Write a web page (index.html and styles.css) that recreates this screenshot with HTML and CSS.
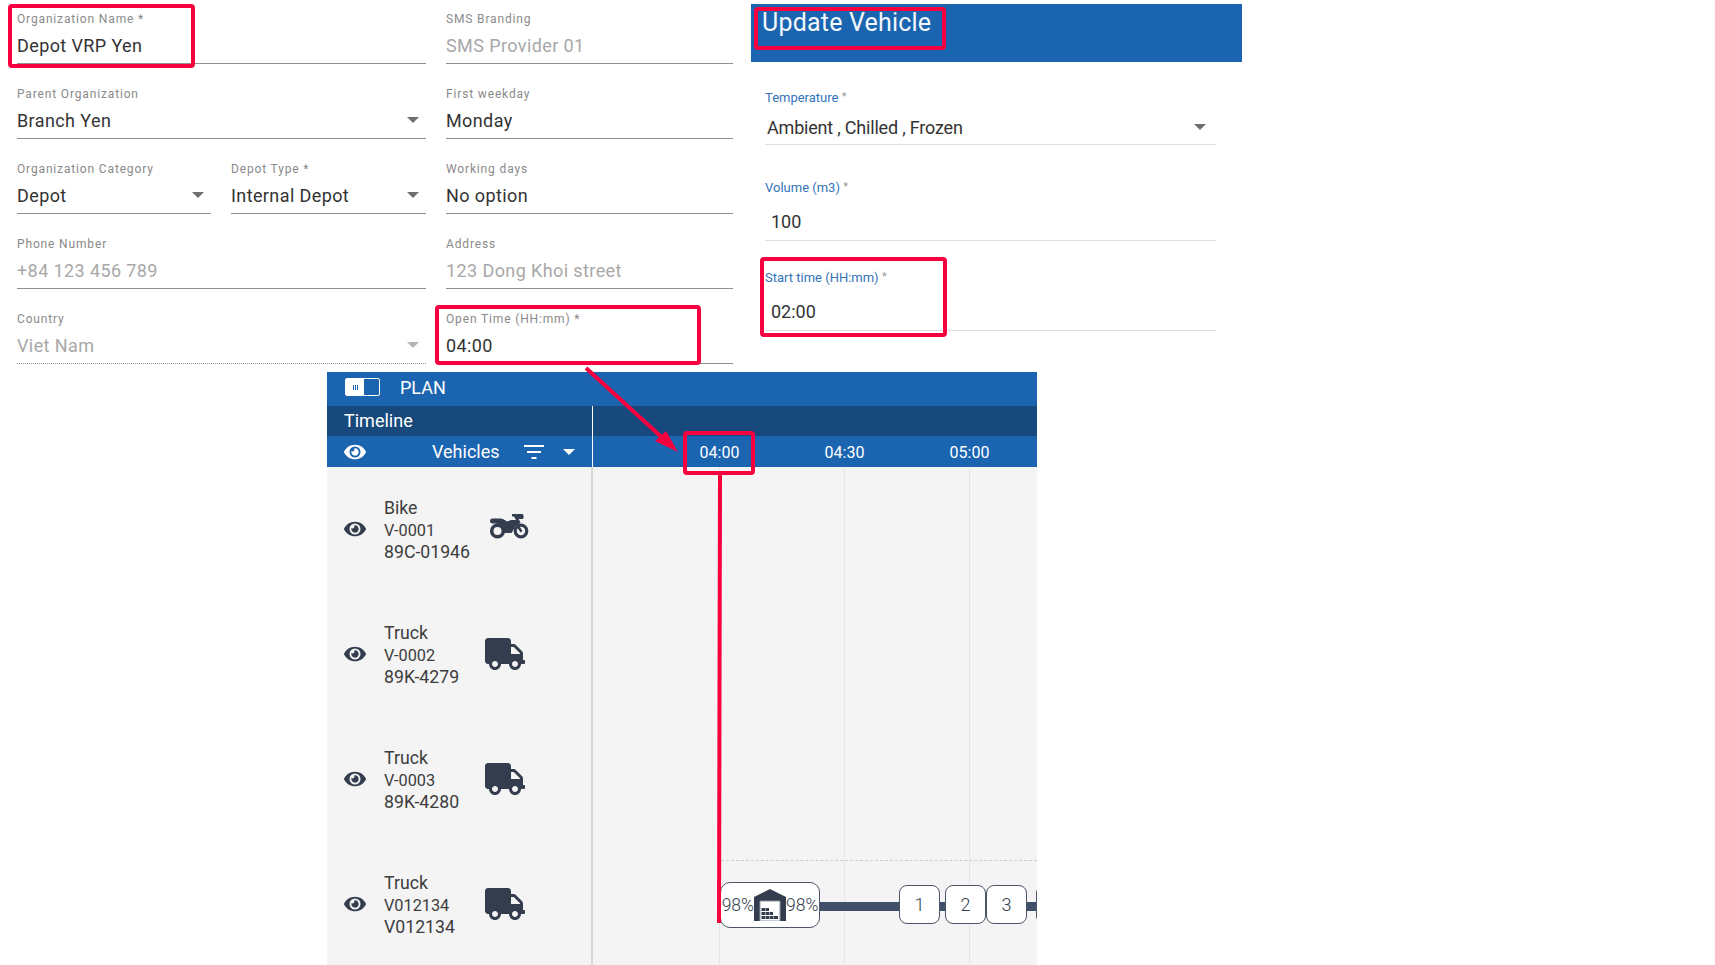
FILE: index.html
```html
<!DOCTYPE html>
<html>
<head>
<meta charset="utf-8">
<title>Depot settings</title>
<link rel="stylesheet" href="styles.css">
</head>
<body>
<svg class="defs" width="0" height="0">
	<symbol id="eye" viewBox="0 0 576 512"><path d="M572.52 241.4C518.29 135.59 410.93 64 288 64S57.68 135.64 3.48 241.41a32.35 32.35 0 0 0 0 29.19C57.71 376.41 165.07 448 288 448s230.32-71.64 284.52-177.41a32.35 32.35 0 0 0 0-29.19zM288 400a144 144 0 1 1 144-144 143.93 143.93 0 0 1-144 144zm0-240a95.31 95.31 0 0 0-25.31 3.79 47.85 47.85 0 0 1-66.9 66.9A95.78 95.78 0 1 0 288 160z"/></symbol>
	<symbol id="truck" viewBox="0 0 640 512"><path d="M624 352h-16V243.9c0-12.7-5.1-24.9-14.1-33.9L494 110.1c-9-9-21.2-14.1-33.9-14.1H416V48c0-26.5-21.5-48-48-48H48C21.5 0 0 21.5 0 48v320c0 26.5 21.5 48 48 48h16c0 53 43 96 96 96s96-43 96-96h128c0 53 43 96 96 96s96-43 96-96h48c8.8 0 16-7.2 16-16v-32c0-8.8-7.2-16-16-16zM160 464c-26.5 0-48-21.5-48-48s21.5-48 48-48 48 21.5 48 48-21.5 48-48 48zm320 0c-26.5 0-48-21.5-48-48s21.5-48 48-48 48 21.5 48 48-21.5 48-48 48zm80-208H416V144h44.1l99.9 99.9V256z"/></symbol>
	<symbol id="bike" viewBox="0 0 40 25"><circle cx="8.500" cy="17" r="5.800" fill="none" stroke="currentColor" stroke-width="3.600"/><circle cx="32" cy="17" r="5.800" fill="none" stroke="currentColor" stroke-width="3.200"/><path d="M1 7C1 5.500 2 4.500 3.500 4.500H11C14 4.500 16 6 18 7.500L22 6H27L25 2.500H23V0H27L31.500 8.500L29.500 10.500L33.500 17L31.500 18.500L27 11.500L22.500 19H15.500C15.500 13.500 11.500 9.500 6 9.500H3.500C2 9.500 1 8.500 1 7Z"/><path d="M27 0H33C34 0 34.500 .8 34.500 1.800V3.500C34.500 4.500 33.800 5 33 5H28.500Z"/></symbol>
</svg>

<div class="top">
	<form class="org-form">
		<div class="field"><label>Organization Name *</label><div class="value">Depot VRP Yen</div></div>
		<div class="field"><label>SMS Branding</label><div class="value muted">SMS Provider 01</div></div>
		<div class="field"><label>Parent Organization</label><div class="value select">Branch Yen</div></div>
		<div class="field"><label>First weekday</label><div class="value">Monday</div></div>
		<div class="pair">
			<div class="field"><label>Organization Category</label><div class="value select">Depot</div></div>
			<div class="field"><label>Depot Type *</label><div class="value select">Internal Depot</div></div>
		</div>
		<div class="field"><label>Working days</label><div class="value">No option</div></div>
		<div class="field"><label>Phone Number</label><div class="value muted">+84 123 456 789</div></div>
		<div class="field"><label>Address</label><div class="value muted">123 Dong Khoi street</div></div>
		<div class="field dotted"><label>Country</label><div class="value select muted">Viet Nam</div></div>
		<div class="field"><label>Open Time (HH:mm) *</label><div class="value">04:00</div></div>
	</form>

	<section class="vehicle">
		<h2>Update Vehicle</h2>
		<div class="vfields">
			<div class="vfield"><label>Temperature <sup>*</sup></label><div class="vvalue select tight">Ambient , Chilled , Frozen</div></div>
			<div class="vfield"><label>Volume (m3) <sup>*</sup></label><div class="vvalue">100</div></div>
			<div class="vfield"><label>Start time (HH:mm) <sup>*</sup></label><div class="vvalue">02:00</div></div>
		</div>
	</section>
</div>

<section class="plan">
	<div class="plan-head">
		<span class="toggle"><span class="toggle-on"><i></i></span></span>
		<span>PLAN</span>
	</div>
	<div class="timeline-row"><div class="side">Timeline</div></div>
	<div class="vehicles-row">
		<div class="side">
			<svg class="eye"><use href="#eye"/></svg>
			<span class="vehicles-title">Vehicles</span>
			<svg class="filter" viewBox="0 0 20 14"><path d="M0 0H20V2H0ZM3 6H17V8H3ZM7.500 12H12.500V14H7.500Z"/></svg>
			<span class="caret"></span>
		</div>
		<div class="ticks"><span>04:00</span><span>04:30</span><span>05:00</span></div>
	</div>
	<div class="plan-body">
		<div class="vehicle-list">
			<div class="vrow">
				<svg class="eye"><use href="#eye"/></svg>
				<div class="vtext">Bike<br><span class="code">V-0001</span><br>89C-01946</div>
				<svg class="bike"><use href="#bike"/></svg>
			</div>
			<div class="vrow">
				<svg class="eye"><use href="#eye"/></svg>
				<div class="vtext">Truck<br><span class="code">V-0002</span><br>89K-4279</div>
				<svg class="truck"><use href="#truck"/></svg>
			</div>
			<div class="vrow">
				<svg class="eye"><use href="#eye"/></svg>
				<div class="vtext">Truck<br><span class="code">V-0003</span><br>89K-4280</div>
				<svg class="truck"><use href="#truck"/></svg>
			</div>
			<div class="vrow">
				<svg class="eye"><use href="#eye"/></svg>
				<div class="vtext">Truck<br><span class="code">V012134</span><br>V012134</div>
				<svg class="truck"><use href="#truck"/></svg>
			</div>
		</div>
		<div class="chart">
			<div class="gridline g1"></div>
			<div class="gridline g2"></div>
			<div class="gridline g3"></div>
			<div class="dash"></div>
			<div class="route">
				<div class="depot">
					<span>98%</span>
					<svg class="warehouse" viewBox="0 0 32 32">
						<path d="M0 8L16 0L32 8V32H26V12H6V32H0Z"/>
						<path class="wh-edge" d="M6 12H26V32H6Z"/>
						<path d="M7.500 19H11V22H7.500ZM11.500 19H15V22H11.500ZM7.500 23H11V26H7.500ZM11.500 23H15V26H11.500ZM15.500 23H19V26H15.500ZM7.500 27H11V30H7.500ZM11.500 27H15V30H11.500ZM15.500 27H19V30H15.500ZM19.500 27H24V30H19.500Z"/>
					</svg>
					<span>98%</span>
				</div>
				<div class="stop s1">1</div>
				<div class="stop s2">2</div>
				<div class="stop s3">3</div>
				<div class="stop s4"></div>
			</div>
		</div>
	</div>
</section>

<!-- red annotations drawn over the screenshot -->
<div class="mark m-org"></div>
<div class="mark m-open"></div>
<div class="mark m-title"></div>
<div class="mark m-start"></div>
<div class="mark m-tick"></div>
<svg class="arrow" width="1715" height="965">
	<path d="M586 368L668 443" fill="none" stroke="#f8003f" stroke-width="4"/>
	<path d="M678 452L655 441L666 431Z" fill="#f8003f"/>
	<path d="M720 474L719 923" fill="none" stroke="#f8003f" stroke-width="4"/>
</svg>
</body>
</html>
```

FILE: styles.css
```css
html, body {
	margin: 0;
	padding: 0;
	height: 100%;
	overflow: hidden;
	background: #ffffff;
	font-family: Roboto, "Liberation Sans", sans-serif;
	color: #333333;
}
.defs {
	position: absolute;
}
svg {
	fill: currentColor;
	display: block;
}

.top {
	display: flex;
	height: 372px;
}

/* organization form */
.org-form {
	display: grid;
	grid-template-columns: 409px 287px;
	grid-auto-rows: 64px;
	column-gap: 20px;
	row-gap: 11px;
	margin-left: 17px;
	width: 716px;
}
.pair {
	display: grid;
	grid-template-columns: 194px 195px;
	column-gap: 20px;
}
.field {
	height: 64px;
	box-sizing: border-box;
	border-bottom: 1px solid #8f8f8f;
	padding-top: 12px;
}
.field.dotted {
	border-bottom: 1px dotted #8f8f8f;
}
.field label {
	display: block;
	font-size: 12px;
	line-height: 14px;
	letter-spacing: 0.85px;
	color: #8a8a8a;
}
.field .value {
	font-size: 18px;
	line-height: 22px;
	margin-top: 9px;
	letter-spacing: 0.4px;
	color: #333333;
}
.field .value.muted {
	color: #a8a8a8;
}
.select {
	position: relative;
}
.select::after {
	content: "";
	position: absolute;
	right: 7px;
	top: 7px;
	border-left: 6px solid transparent;
	border-right: 6px solid transparent;
	border-top: 6px solid #6f6f6f;
}
.muted.select::after {
	border-top-color: #b5b5b5;
}

/* update vehicle panel */
.vehicle {
	width: 491px;
	margin: 4px 0 0 18px;
}
.vehicle h2 {
	margin: 0;
	height: 58px;
	box-sizing: border-box;
	background: #1b65b0;
	color: #f2f7fb;
	font-size: 25px;
	font-weight: 400;
	line-height: 28px;
	padding: 5px 0 0 11px;
	letter-spacing: 0.2px;
}
.vfields {
	padding: 29px 26px 0 14px;
}
.vfield {
	height: 90px;
}
.vfield label {
	display: block;
	font-size: 13px;
	line-height: 14px;
	color: #3373b8;
}
.vfield sup {
	color: #9a9a9a;
	font-size: 11px;
	line-height: 0;
	vertical-align: 2px;
}
.vvalue {
	height: 30px;
	box-sizing: border-box;
	font-size: 18px;
	line-height: 22px;
	margin-top: 16px;
	padding-left: 6px;
	border-bottom: 1px solid #dedede;
	color: #333333;
}
.vvalue.tight {
	height: 28px;
	margin-top: 12px;
	padding-left: 2px;
	letter-spacing: -0.2px;
}
.vvalue.select::after {
	right: 10px;
}

/* plan panel */
.plan {
	width: 710px;
	height: 593px;
	margin-left: 327px;
	background: #f4f4f4;
	font-size: 18px;
}
.plan-head {
	height: 34px;
	box-sizing: border-box;
	padding: 0 0 4px 18px;
	background: #1b65b0;
	color: #ffffff;
	display: flex;
	align-items: center;
	gap: 20px;
}
.toggle {
	display: block;
	width: 35px;
	height: 18px;
	box-sizing: border-box;
	border: 1px solid #ffffff;
	border-radius: 2px;
}
.toggle-on {
	display: flex;
	align-items: center;
	justify-content: center;
	width: 18px;
	height: 16px;
	background: #ffffff;
}
.toggle-on i {
	display: block;
	width: 5px;
	height: 5px;
	background: repeating-linear-gradient(90deg, #1b65b0 0 1px, #ffffff 1px 2px);
}
.timeline-row {
	height: 30px;
	background: #17497d;
	color: #ffffff;
}
.timeline-row .side {
	width: 248px;
	height: 28px;
	display: flex;
	align-items: center;
	padding: 0 0 2px 17px;
	border-right: 1px solid #ffffff;
}
.vehicles-row {
	height: 31px;
	background: #1b65b0;
	color: #ffffff;
	display: flex;
}
.vehicles-row .side {
	width: 265px;
	display: flex;
	align-items: center;
	border-right: 1px solid #ffffff;
}
.eye {
	width: 22px;
	height: 20px;
	margin-left: 17px;
	flex: none;
}
.vehicles-title {
	margin-left: 66px;
}
.filter {
	width: 20px;
	height: 14px;
	margin-left: 24px;
}
.caret {
	margin-left: 19px;
	border-left: 6px solid transparent;
	border-right: 6px solid transparent;
	border-top: 6px solid #ffffff;
}
.ticks {
	display: grid;
	grid-template-columns: repeat(3, 125px);
	margin-left: 64px;
	font-size: 16px;
	line-height: 33px;
	height: 31px;
	text-align: center;
}
.plan-body {
	display: flex;
	height: 498px;
}
.vehicle-list {
	width: 264px;
	flex: none;
	border-right: 2px solid #d6d6d6;
	padding-top: 26px;
	color: #333d4d;
}
.vrow {
	height: 125px;
	display: flex;
	align-items: flex-start;
	color: #333d4d;
}
.vrow .eye {
	margin-top: 26px;
}
.vtext {
	margin-left: 18px;
	width: 101px;
	font-size: 17.700px;
	line-height: 22px;
	padding-top: 4px;
	color: #3d3d3d;
}
.code {
	font-size: 16.300px;
	line-height: 0;
}
.truck {
	width: 40px;
	height: 32px;
	margin-top: 20px;
}
.bike {
	width: 40px;
	height: 25px;
	margin: 21px 0 0 4px;
}

/* gantt chart, items sit on a free canvas */
.chart {
	position: relative;
	flex: 1;
	overflow: hidden;
}
.gridline {
	position: absolute;
	top: 0;
	bottom: 0;
	width: 1px;
	background: #e6e6e6;
}
.g1 { left: 126px; }
.g2 { left: 251px; }
.g3 { left: 376px; }
.dash {
	position: absolute;
	left: 128px;
	right: 0;
	top: 393px;
	border-top: 1px dashed #cccccc;
}
.route {
	position: absolute;
	left: 225px;
	right: 0;
	top: 435px;
	height: 9px;
	background: #3f5068;
}
.depot, .stop {
	position: absolute;
	box-sizing: border-box;
	background: #ffffff;
	border: 1px solid #4b5565;
	display: flex;
	align-items: center;
	justify-content: center;
}
.depot {
	left: -98px;
	top: -20px;
	width: 100px;
	height: 46px;
	border-radius: 10px;
	font-size: 17.500px;
	font-weight: 300;
	color: #333d4d;
}
.warehouse {
	width: 32px;
	height: 32px;
	flex: none;
	color: #333d4d;
}
.wh-edge {
	fill: #ffffff;
	stroke: #8d95a1;
	stroke-width: 1;
}
.stop {
	top: -17px;
	width: 41px;
	height: 39px;
	border-radius: 8px;
	font-size: 18px;
	font-weight: 300;
	color: #333d4d;
}
.s1 { left: 81px; }
.s2 { left: 127px; }
.s3 { left: 168px; }
.s4 { left: 218px; }

/* annotations */
.mark {
	position: absolute;
	box-sizing: border-box;
	border: 4px solid #f8003f;
	border-radius: 4px;
}
.m-org { left: 8px; top: 4px; width: 187px; height: 64px; }
.m-open { left: 435px; top: 305px; width: 266px; height: 60px; }
.m-title { left: 754px; top: 7px; width: 192px; height: 43px; }
.m-start { left: 760px; top: 257px; width: 187px; height: 80px; }
.m-tick { left: 683px; top: 431px; width: 72px; height: 44px; }
.arrow {
	position: absolute;
	left: 0;
	top: 0;
}
```
